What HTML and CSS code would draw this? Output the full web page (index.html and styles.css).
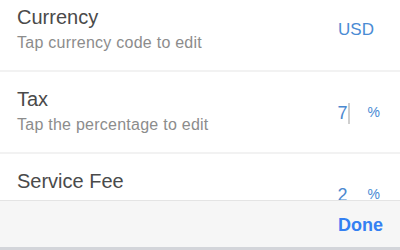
FILE: index.html
```html
<!DOCTYPE html>
<html>
<head>
<meta charset="utf-8">
<link rel="stylesheet" href="styles.css">
</head>
<body>
<div class="screen">
  <div class="list">
    <div class="rows">
      <div class="row">
        <div class="info">
          <div class="title">Currency</div>
          <div class="sub">Tap currency code to edit</div>
        </div>
        <div class="code">USD</div>
      </div>
      <div class="row">
        <div class="info">
          <div class="title">Tax</div>
          <div class="sub">Tap the percentage to edit</div>
        </div>
        <div class="value">
          <span class="num">7</span><span class="caret"></span><span class="pct">%</span>
        </div>
      </div>
      <div class="row">
        <div class="info">
          <div class="title">Service Fee</div>
          <div class="sub">Tap the percentage to edit</div>
        </div>
        <div class="value">
          <span class="num">2</span><span class="caret hidden"></span><span class="pct">%</span>
        </div>
      </div>
    </div>
  </div>
  <div class="toolbar">
    <span class="done">Done</span>
  </div>
  <div class="kb-edge"></div>
</div>
</body>
</html>
```
FILE: styles.css
```css
html, body {
  margin: 0;
  padding: 0;
  background: #ffffff;
}
body {
  width: 400px;
  height: 250px;
  overflow: hidden;
  font-family: "Liberation Sans", Arial, sans-serif;
}
.screen {
  display: flex;
  flex-direction: column;
  height: 250px;
}
.list {
  flex: 1;
  overflow: hidden;
}
.rows {
  margin-top: -10px;
  display: flex;
  flex-direction: column;
}
.row {
  height: 80px;
  flex-shrink: 0;
  display: flex;
  align-items: center;
  padding-left: 17px;
  border-bottom: 2px solid #f2f2f2;
  background: #ffffff;
}
.info {
  flex: 1;
  align-self: flex-start;
  padding-top: 15px;
}
.title {
  font-size: 20px;
  line-height: 24px;
  color: #4a4a4a;
}
.sub {
  margin-top: 4px;
  font-size: 16px;
  line-height: 19px;
  letter-spacing: 0.25px;
  color: #8c8c8c;
}
.code {
  font-size: 17px;
  line-height: 20px;
  color: #4a8bd4;
  margin-right: 26px;
  margin-top: 0px;
}
.value {
  display: flex;
  align-items: flex-start;
  margin-right: 20px;
  margin-top: 2px;
}
.num {
  font-size: 18px;
  line-height: 21px;
  color: #4a88d0;
}
.caret {
  width: 2px;
  height: 21px;
  margin-top: 0px;
  background: #cfcfcf;
}
.caret.hidden {
  background: transparent;
}
.pct {
  font-size: 14px;
  line-height: 16px;
  margin-top: 1px;
  margin-left: 18px;
  color: #4a8bd4;
}
.toolbar {
  height: 46px;
  flex-shrink: 0;
  border-top: 1px solid #e4e4e4;
  background: #f6f6f6;
  display: flex;
  align-items: center;
  justify-content: flex-end;
  padding-right: 17px;
}
.done {
  font-size: 18px;
  line-height: 22px;
  font-weight: bold;
  color: #3480f2;
  margin-top: 2px;
}
.kb-edge {
  height: 3px;
  flex-shrink: 0;
  background: #d3d5da;
}
```
